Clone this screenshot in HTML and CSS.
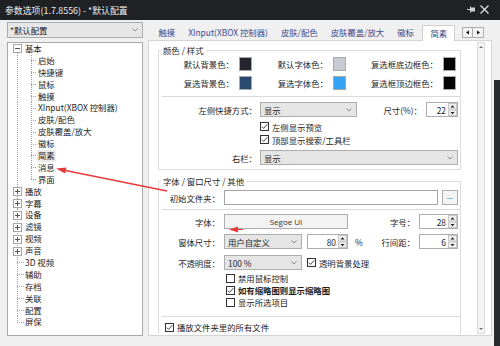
FILE: index.html
```html
<!DOCTYPE html>
<html lang="zh-CN">
<head>
<meta charset="utf-8">
<title>参数选项</title>
<link rel="stylesheet" href="styles.css">
</head>
<body>
<div class="window">
  <header class="titlebar">
    <span class="title">参数选项(1.7.8556) - *默认配置</span>
    <svg class="tb-icons" width="24" height="10" viewBox="0 0 24 10">
      <path d="M1 4.5H4.5M4.5 1.5V7.5" stroke="#cfcfcf" stroke-width="1" fill="none"/>
      <rect x="5" y="2.5" width="4" height="4" fill="#cfcfcf"/>
      <path d="M14.5 0.5L22.5 8.5M22.5 0.5L14.5 8.5" stroke="#e2e2e2" stroke-width="1.2" fill="none"/>
    </svg>
  </header>

  <div class="main">
    <aside class="left">
      <div class="combo">
        <span>*默认配置</span>
        <svg class="chev" width="6" height="4" viewBox="0 0 6 4"><path d="M0.5 0.5L3 3L5.5 0.5" stroke="#8a8a8a" fill="none"/></svg>
      </div>
      <div class="tree">
        <div class="row"><span class="ca first"><span class="tw minus"></span></span><span class="lbl top">基本</span></div>
        <div class="row"><span class="ca vl"></span><span class="cb tee"></span><span class="lbl">启始</span></div>
        <div class="row"><span class="ca vl"></span><span class="cb tee"></span><span class="lbl">快捷键</span></div>
        <div class="row"><span class="ca vl"></span><span class="cb tee"></span><span class="lbl">鼠标</span></div>
        <div class="row"><span class="ca vl"></span><span class="cb tee"></span><span class="lbl">触摸</span></div>
        <div class="row"><span class="ca vl"></span><span class="cb tee"></span><span class="lbl">XInput(XBOX 控制器)</span></div>
        <div class="row"><span class="ca vl"></span><span class="cb tee"></span><span class="lbl">皮肤/配色</span></div>
        <div class="row"><span class="ca vl"></span><span class="cb tee"></span><span class="lbl">皮肤覆盖/放大</span></div>
        <div class="row"><span class="ca vl"></span><span class="cb tee"></span><span class="lbl">徽标</span></div>
        <div class="row"><span class="ca vl"></span><span class="cb tee"></span><span class="lbl sel">简素</span></div>
        <div class="row"><span class="ca vl"></span><span class="cb tee"></span><span class="lbl">消息</span></div>
        <div class="row"><span class="ca vl"></span><span class="cb end"></span><span class="lbl">界面</span></div>
        <div class="row"><span class="ca vl"><span class="tw plus"></span></span><span class="lbl top">播放</span></div>
        <div class="row"><span class="ca vl"><span class="tw plus"></span></span><span class="lbl top">字幕</span></div>
        <div class="row"><span class="ca vl"><span class="tw plus"></span></span><span class="lbl top">设备</span></div>
        <div class="row"><span class="ca vl"><span class="tw plus"></span></span><span class="lbl top">滤镜</span></div>
        <div class="row"><span class="ca vl"><span class="tw plus"></span></span><span class="lbl top">视频</span></div>
        <div class="row"><span class="ca vl"><span class="tw plus"></span></span><span class="lbl top">声音</span></div>
        <div class="row"><span class="ca tee"></span><span class="lbl top">3D 视频</span></div>
        <div class="row"><span class="ca tee"></span><span class="lbl top">辅助</span></div>
        <div class="row"><span class="ca tee"></span><span class="lbl top">存档</span></div>
        <div class="row"><span class="ca tee"></span><span class="lbl top">关联</span></div>
        <div class="row"><span class="ca tee"></span><span class="lbl top">配置</span></div>
        <div class="row"><span class="ca end"></span><span class="lbl top">屏保</span></div>
      </div>
    </aside>

    <section class="right">
      <div class="tabbar">
        <nav class="tabs">
          <span class="tab">触摸</span>
          <span class="tab">XInput(XBOX 控制器)</span>
          <span class="tab">皮肤/配色</span>
          <span class="tab">皮肤覆盖/放大</span>
          <span class="tab">徽标</span>
          <span class="tab active">简素</span>
          <span class="tab">消息</span>
        </nav>
        <div class="tabscroll">
          <span class="tsb"><svg width="5" height="5" viewBox="0 0 5 5"><path d="M4 0.5V4.5L1 2.5Z" fill="#111"/></svg></span>
          <span class="tsb"><svg width="5" height="5" viewBox="0 0 5 5"><path d="M1 0.5V4.5L4 2.5Z" fill="#111"/></svg></span>
        </div>
      </div>

      <div class="panel">
        <div class="content">
          <fieldset class="group g1">
            <legend>颜色 / 样式</legend>
            <div class="colors">
              <span class="lab">默认背景色：</span><span class="sw c-dark"></span>
              <span class="lab">默认字体色：</span><span class="sw c-light"></span>
              <span class="lab">复选框底边框色：</span><span class="sw c-black"></span>
              <span class="lab">复选背景色：</span><span class="sw c-navy"></span>
              <span class="lab">复选字体色：</span><span class="sw c-blue"></span>
              <span class="lab">复选框顶边框色：</span><span class="sw c-black"></span>
            </div>
            <div class="sep"></div>
            <div class="frow">
              <span class="flabel">左侧快捷方式：</span>
              <span class="select w97"><span>显示</span><svg class="chev" width="6" height="4" viewBox="0 0 6 4"><path d="M0.5 0.5L3 3L5.5 0.5" stroke="#8a8a8a" fill="none"/></svg></span>
              <span class="push">尺寸(%)：</span>
              <span class="spin w32"><span class="val">22</span><svg class="sb" width="9" height="13" viewBox="0 0 9 13"><rect x="0.5" y="0.5" width="8" height="5.5" fill="#efefef" stroke="#c6c6c6"/><rect x="0.5" y="7" width="8" height="5.5" fill="#efefef" stroke="#c6c6c6"/><path d="M2.5 4.5L4.5 2.3L6.5 4.5Z M2.5 9L4.5 11.2L6.5 9Z" fill="#222"/></svg></span>
            </div>
            <div class="cbrows g1cb">
              <div class="cbrow"><span class="chk"><svg width="7" height="7" viewBox="0 0 7 7"><path d="M0.8 3.6L2.6 5.4L6.3 1.2" stroke="#333" stroke-width="0.9" fill="none"/></svg></span><span>左侧显示预览</span></div>
              <div class="cbrow"><span class="chk"><svg width="7" height="7" viewBox="0 0 7 7"><path d="M0.8 3.6L2.6 5.4L6.3 1.2" stroke="#333" stroke-width="0.9" fill="none"/></svg></span><span>顶部显示搜索/工具栏</span></div>
            </div>
            <div class="frow r-right">
              <span class="flabel">右栏：</span>
              <span class="select grow"><span>显示</span><svg class="chev" width="6" height="4" viewBox="0 0 6 4"><path d="M0.5 0.5L3 3L5.5 0.5" stroke="#8a8a8a" fill="none"/></svg></span>
            </div>
          </fieldset>

          <fieldset class="group g2">
            <legend>字体 / 窗口尺寸 / 其他</legend>
            <div class="frow first">
              <span class="flabel l2">初始文件夹：</span>
              <span class="input"></span>
              <span class="btn dots">...</span>
            </div>
            <div class="sep s2"></div>
            <div class="frow r-font">
              <span class="flabel l2">字体：</span>
              <span class="btn font">Segoe UI</span>
              <span class="push">字号：</span>
              <span class="spin w39"><span class="val">28</span><svg class="sb" width="9" height="13" viewBox="0 0 9 13"><rect x="0.5" y="0.5" width="8" height="5.5" fill="#efefef" stroke="#c6c6c6"/><rect x="0.5" y="7" width="8" height="5.5" fill="#efefef" stroke="#c6c6c6"/><path d="M2.5 4.5L4.5 2.3L6.5 4.5Z M2.5 9L4.5 11.2L6.5 9Z" fill="#222"/></svg></span>
            </div>
            <div class="frow r-size">
              <span class="flabel l2">窗体尺寸：</span>
              <span class="select w78"><span>用户自定义</span><svg class="chev" width="6" height="4" viewBox="0 0 6 4"><path d="M0.5 0.5L3 3L5.5 0.5" stroke="#8a8a8a" fill="none"/></svg></span>
              <span class="spin w41 ml5"><span class="val">80</span><svg class="sb" width="9" height="13" viewBox="0 0 9 13"><rect x="0.5" y="0.5" width="8" height="5.5" fill="#efefef" stroke="#c6c6c6"/><rect x="0.5" y="7" width="8" height="5.5" fill="#efefef" stroke="#c6c6c6"/><path d="M2.5 4.5L4.5 2.3L6.5 4.5Z M2.5 9L4.5 11.2L6.5 9Z" fill="#222"/></svg></span>
              <span class="pct">%</span>
              <span class="push">行间距：</span>
              <span class="spin w39"><span class="val">6</span><svg class="sb" width="9" height="13" viewBox="0 0 9 13"><rect x="0.5" y="0.5" width="8" height="5.5" fill="#efefef" stroke="#c6c6c6"/><rect x="0.5" y="7" width="8" height="5.5" fill="#efefef" stroke="#c6c6c6"/><path d="M2.5 4.5L4.5 2.3L6.5 4.5Z M2.5 9L4.5 11.2L6.5 9Z" fill="#222"/></svg></span>
            </div>
            <div class="frow r-opa">
              <span class="flabel l2">不透明度：</span>
              <span class="select w78"><span>100 %</span><svg class="chev" width="6" height="4" viewBox="0 0 6 4"><path d="M0.5 0.5L3 3L5.5 0.5" stroke="#8a8a8a" fill="none"/></svg></span>
              <span class="chk ml5"><svg width="7" height="7" viewBox="0 0 7 7"><path d="M0.8 3.6L2.6 5.4L6.3 1.2" stroke="#333" stroke-width="0.9" fill="none"/></svg></span><span>透明背景处理</span>
            </div>
            <div class="cbrows g2cb">
              <div class="cbrow r12"><span class="chk"></span><span>禁用鼠标控制</span></div>
              <div class="cbrow r12"><span class="chk"><svg width="7" height="7" viewBox="0 0 7 7"><path d="M0.8 3.6L2.6 5.4L6.3 1.2" stroke="#333" stroke-width="0.9" fill="none"/></svg></span><span class="bold">如有缩略图则显示缩略图</span></div>
              <div class="cbrow r12"><span class="chk"></span><span>显示所选项目</span></div>
            </div>
            <div class="sep s3"></div>
            <div class="cbrow last"><span class="chk"><svg width="7" height="7" viewBox="0 0 7 7"><path d="M0.8 3.6L2.6 5.4L6.3 1.2" stroke="#333" stroke-width="0.9" fill="none"/></svg></span><span>播放文件夹里的所有文件</span></div>
          </fieldset>
        </div>
        <div class="vscroll">
          <svg width="6" height="6" viewBox="0 0 6 6"><path d="M1 4L3 2L5 4Z" fill="#777"/></svg>
          <svg width="6" height="6" viewBox="0 0 6 6"><path d="M1 2L3 4L5 2Z" fill="#777"/></svg>
        </div>
      </div>
    </section>
    <div class="edge"></div>
  </div>

  <svg class="annot" width="500" height="346" viewBox="0 0 500 346">
    <line x1="167" y1="191" x2="63" y2="170" stroke="#e83a3a" stroke-width="1.3"/>
    <polygon points="56,168.5 66.4,167.4 65.2,173.4" fill="#e83a3a"/>
    <line x1="236" y1="229.5" x2="243" y2="229.5" stroke="#e83a3a" stroke-width="1"/>
    <polygon points="229,229.5 238,226.6 238,232.4" fill="#e83a3a"/>
  </svg>
</div>
</body>
</html>
```

FILE: styles.css
```css
* { box-sizing: border-box; }
html, body { margin: 0; padding: 0; }
body {
  width: 500px;
  height: 346px;
  overflow: hidden;
  background: #f0f0f0;
  font-family: "Noto Sans CJK SC", "Noto Sans", sans-serif;
  font-size: 8.4px;
  color: #1e1e1e;
}
.window { position: relative; width: 500px; height: 346px; overflow: hidden; }

.titlebar {
  height: 20px;
  background: #1f2125;
  color: #eeeeee;
  display: flex;
  align-items: center;
  justify-content: space-between;
  padding: 0 10px 0 5px;
  font-size: 8.9px;
  white-space: nowrap;
}
.tb-icons { display: block; }

.main { display: flex; padding: 2px 0 0 7px; height: 326px; }

/* left column */
.left { width: 136px; flex: none; display: flex; flex-direction: column; }
.combo {
  height: 16px;
  border: 1px solid #adadad;
  background: #e6e6e6;
  display: flex;
  align-items: center;
  justify-content: space-between;
  padding: 0 4px 0 2px;
}
.chev { display: block; flex: none; }
.tree {
  margin-top: 4px;
  height: 294px;
  border: 1px solid #a9a9a9;
  background: #fff;
  padding: 0 0 0 4px;
  --dv: repeating-linear-gradient(to bottom, #a3a3a3 0 1px, transparent 1px 2px);
  --dh: repeating-linear-gradient(to right, #a3a3a3 0 1px, transparent 1px 2px);
}
.row { height: 11.9px; display: flex; align-items: stretch; white-space: nowrap; }
.lbl { line-height: 11.9px; }
.lbl.top { margin-left: 1px; }
.lbl.sel { background: #ebebeb; padding: 0 1px; margin-left: -1px; }
.ca, .cb { flex: none; display: flex; align-items: center; }
.ca { width: 12px; }
.cb { width: 14px; }
.ca.vl { background: var(--dv) 5px 0 / 1px 100% no-repeat; }
.ca.first { background: var(--dv) 5px 100% / 1px 50% no-repeat; }
.ca.tee { background: var(--dv) 5px 0 / 1px 100% no-repeat, var(--dh) 5px 50% / 7px 1px no-repeat; }
.ca.end { background: var(--dv) 5px 0 / 1px 50% no-repeat, var(--dh) 5px 50% / 7px 1px no-repeat; }
.cb.tee { background: var(--dv) 7px 0 / 1px 100% no-repeat, var(--dh) 7px 50% / 6px 1px no-repeat; }
.cb.end { background: var(--dv) 7px 0 / 1px 50% no-repeat, var(--dh) 7px 50% / 6px 1px no-repeat; }
.tw {
  width: 9px;
  height: 9px;
  margin-left: 1px;
  border: 1px solid #a6a6a6;
}
.tw.minus { background: linear-gradient(#555, #555) center / 5px 1px no-repeat, #fff; }
.tw.plus {
  background: linear-gradient(#555, #555) center / 5px 1px no-repeat,
              linear-gradient(#555, #555) center / 1px 5px no-repeat, #fff;
}

/* right column */
.right { width: 344px; flex: none; margin-left: 5px; display: flex; flex-direction: column; }
.tabbar {
  height: 19px;
  margin-bottom: -1px;
  display: flex;
  position: relative;
  z-index: 1;
}
.tabs {
  width: 314px;
  height: 19px;
  display: flex;
  align-items: flex-start;
  padding: 3px 0 0 4px;
  overflow: hidden;
  white-space: nowrap;
}
.tab {
  flex: none;
  height: 15px;
  line-height: 14px;
  padding: 0 6.5px;
  color: #414c8c;
}
.tab.active {
  height: 16px;
  line-height: 15px;
  margin-left: 2px;
  padding: 0 7px;
  background: #fff;
  border: 1px solid #cfcfcf;
  border-bottom: none;
  color: #3a4480;
}
.tabscroll { display: flex; margin-top: 5px; height: 11px; }
.tsb {
  width: 11px;
  height: 11px;
  border: 1px solid #adadad;
  background: #f3f3f3;
  display: flex;
  align-items: center;
  justify-content: center;
}
.tsb + .tsb { border-left: none; }

.panel {
  height: 296px;
  border: 1px solid #d4d4d4;
  background: #fff;
  display: flex;
  padding: 1px 6px 1px 0;
}
.content {
  flex: 1;
  overflow: hidden;
  padding: 2px 0 0 9px;
}
.vscroll {
  width: 8px;
  margin-left: 6px;
  border: 1px solid #dcdcdc;
  background: #f4f4f4;
  display: flex;
  flex-direction: column;
  justify-content: space-between;
  align-items: center;
  padding: 1px 0;
}
.vscroll svg { display: block; }

.group {
  margin: 0;
  padding: 0 0 4px 0;
  border: 1px solid #dcdcdc;
  width: 303px;
  min-width: 0;
}
.group legend {
  margin-left: 2px;
  padding: 0 2px;
  height: 12px;
  line-height: 12px;
}
.g2 { margin-top: 5px; padding-bottom: 30px; }

.colors {
  display: grid;
  grid-template-columns: 75px 13px 71px 13px 87px 13px;
  grid-auto-rows: 14px;
  column-gap: 5px;
  row-gap: 5px;
  margin-top: 1px;
  align-items: center;
  white-space: nowrap;
}
.colors .lab { text-align: right; }
.sw { width: 13px; height: 14px; border: 1px solid #a8a8a8; }
.c-dark { background: #25252f; }
.c-light { background: #c8c9d3; }
.c-black { background: #050505; }
.c-navy { background: #284a6e; }
.c-blue { background: #36a2f5; }

.sep { height: 1px; background: #dadada; margin: 6px 0 0 3px; }
.s2 { margin-top: 4px; }
.s3 { margin-top: 8px; }

.frow {
  display: flex;
  align-items: center;
  height: 15px;
  margin-top: 5px;
  padding-right: 2px;
  white-space: nowrap;
}
.frow.first { margin-top: 3px; }
.frow.r-right { margin-top: 4px; }
.frow.r-font { margin-top: 4px; }
.frow.r-size { margin-top: 5px; }
.frow.r-opa { margin-top: 6px; }
.flabel { width: 98px; flex: none; text-align: right; margin-right: 3px; }
.flabel.l2 { width: 61px; margin-right: 4px; }
.push { margin-left: auto; margin-right: 4px; }

.select {
  height: 15px;
  border: 1px solid #adadad;
  background: #e5e5e5;
  display: flex;
  align-items: center;
  justify-content: space-between;
  padding: 0 4px 0 3px;
  flex: none;
}
.select.grow { flex: 1; }
.w97 { width: 97px; }
.w78 { width: 78px; }
.w32 { width: 32px; }
.w39 { width: 39px; }
.w41 { width: 41px; }
.ml5 { margin-left: 5px; }
.pct { margin-left: 7px; }

.spin {
  height: 15px;
  border: 1px solid #abadb3;
  background: #fff;
  display: flex;
  align-items: center;
  flex: none;
}
.spin .val { flex: 1; text-align: right; padding-right: 2px; }
.sb { display: block; flex: none; }

.input { flex: 1; height: 15px; border: 1px solid #a5a5a5; background: #fff; }
.btn {
  height: 15px;
  border: 1px solid #adadad;
  background: #f3f3f3;
  display: flex;
  align-items: center;
  justify-content: center;
  flex: none;
}
.btn.dots { width: 16px; margin-left: 4px; font-size: 7px; color: #333; line-height: 1; padding-bottom: 2px; }
.btn.font { width: 124px; font-family: "Open Sans", "Liberation Sans", sans-serif; font-size: 8px; color: #333; }

.chk {
  width: 9px;
  height: 9px;
  border: 1px solid #333;
  background: #fff;
  flex: none;
  margin-right: 3px;
  display: flex;
  align-items: center;
  justify-content: center;
}
.chk svg { display: block; }
.cbrows.g1cb { margin: 3px 0 0 101px; }
.cbrows.g2cb { margin: 2px 0 0 67px; }
.cbrow { display: flex; align-items: center; height: 13px; white-space: nowrap; }
.cbrow.r12 { height: 12px; }
.cbrow.last { margin: 4px 0 0 6px; height: 12px; }
.bold { font-weight: 700; }

.edge { width: 6px; margin: 58px 0 0 2px; background: #2a2b2e; flex: none; height: 268px; }

.annot { position: absolute; left: 0; top: 0; pointer-events: none; }
```
